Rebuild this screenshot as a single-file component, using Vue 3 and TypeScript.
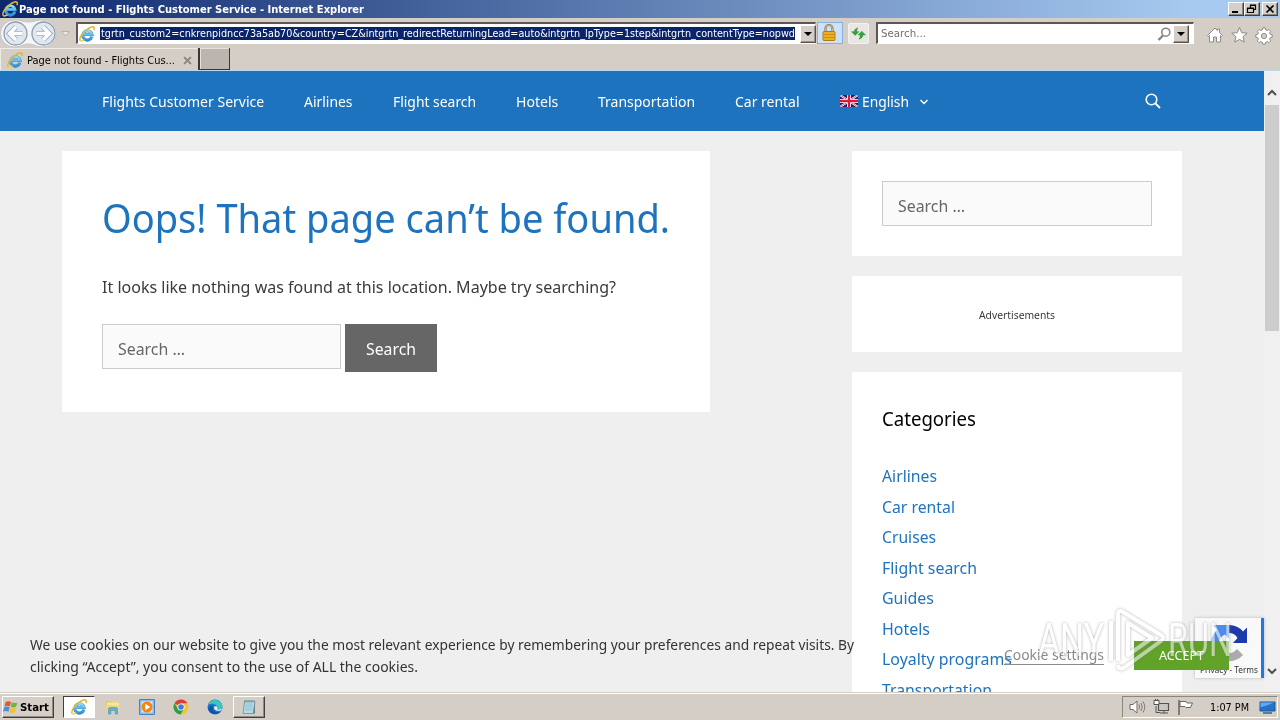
<script setup lang="ts">
import type { Directive } from 'vue'

// Condenses or widens a run of text so that it takes up the given width in px.
const vFit: Directive<HTMLElement, number> = {
  mounted(el, { value }) {
    const natural = el.getBoundingClientRect().width
    el.style.transform = `scaleX(${value / natural})`
    el.style.marginRight = `${value - natural}px`
  },
}

const nav = [
  { label: 'Flights Customer Service', width: 162.2 },
  { label: 'Airlines', width: 48.5 },
  { label: 'Flight search', width: 83.1 },
  { label: 'Hotels', width: 42.3 },
  { label: 'Transportation', width: 97.2 },
  { label: 'Car rental', width: 64.5 },
]

const categories = [
  { label: 'Airlines', width: 55 },
  { label: 'Car rental', width: 73 },
  { label: 'Cruises', width: 54 },
  { label: 'Flight search', width: 95 },
  { label: 'Guides', width: 52 },
  { label: 'Hotels', width: 48 },
  { label: 'Loyalty programs', width: 130 },
  { label: 'Transportation', width: 110 },
]
</script>

<template>
  <div class="screen">
    <svg class="defs" width="0" height="0">
      <defs>
        <linearGradient id="ieBlue" x1="0" y1="0" x2="0" y2="1">
          <stop offset="0" stop-color="#8fdcfb" />
          <stop offset="1" stop-color="#2a90dc" />
        </linearGradient>
        <symbol id="ie" viewBox="0 0 16 16">
          <path d="M12.900 10.700A4.700 4.700 0 1 1 13 8.500H4.500" fill="none" stroke="#2f7fc0" stroke-width="3" />
          <path d="M12.900 10.700A4.700 4.700 0 1 1 13 8.500H4.500" fill="none" stroke="url(#ieBlue)" stroke-width="2.300" />
          <path d="M1.300 14.600C-.3 12.400 3 7.300 7.200 4 11.200.8 15-.2 15.300 2c.1.7-.1 1.500-.5 2.200" fill="none" stroke="#e9b52b" stroke-width="1.500" />
          <path d="M1.300 14.600c1 .9 2.700.2 4.300-.8" fill="none" stroke="#f2cf4a" stroke-width="1.300" />
        </symbol>
      </defs>
    </svg>

    <header class="titlebar">
      <svg class="ie-title"><use href="#ie" /></svg>
      <span v-fit="345" class="fit">Page not found - Flights Customer Service - Internet Explorer</span>
      <div class="winbtns">
        <i class="winbtn"><svg viewBox="0 0 14 12"><path d="M3 9h6" stroke="#000" stroke-width="2" /></svg></i>
        <i class="winbtn"><svg viewBox="0 0 14 12"><path d="M5.500 5V2.500h5v4H9M5 2h6M2.500 5.500h6v4h-6zM2 5h7" fill="none" stroke="#000" stroke-width="1.200" /></svg></i>
        <i class="winbtn close"><svg viewBox="0 0 14 12"><path d="M3.500 2.500l7 7M10.500 2.500l-7 7" stroke="#000" stroke-width="1.700" /></svg></i>
      </div>
    </header>

    <div class="toolbar">
      <svg class="navbtns" viewBox="0 0 72 30">
        <path d="M14 2C22 2 22 4 28.500 4S36 2 43 2a13 13 0 0 1 0 27c-7 0-8-3-14.500-3S22 29 14 29A13.500 13.500 0 0 1 14 2z" fill="#f5f6f8" stroke="#c4c5ca" />
        <g fill="#dfe7f1" stroke="#919cad" stroke-width="1.300">
          <circle cx="15.500" cy="15.500" r="11.500" />
          <circle cx="43.500" cy="15.500" r="11.500" />
        </g>
        <g fill="none" stroke="#9ba9bd" stroke-width="5.200"><path d="M22.500 15.500h-12M16 9l-6.500 6.500L16 22M36.500 15.500h12M43 9l6.500 6.500L43 22" /></g>
        <g fill="none" stroke="#fff" stroke-width="3.400"><path d="M22.500 15.500h-12M16 9l-6.500 6.500L16 22M36.500 15.500h12M43 9l6.500 6.500L43 22" /></g>
        <path d="M61.500 13.500h8l-4 4.500z" fill="#e8e5e2" stroke="#b5b1ad" />
      </svg>
      <div class="address">
        <svg class="ie16"><use href="#ie" /></svg>
        <div class="selected"><span v-fit="694" class="fit">tgrtn_custom2=cnkrenpidncc73a5ab70&amp;country=CZ&amp;intgrtn_redirectReturningLead=auto&amp;intgrtn_lpType=1step&amp;intgrtn_contentType=nopwd</span></div>
        <i class="drop"></i>
      </div>
      <div class="lock">
        <svg viewBox="0 0 16 18"><path d="M4.500 8V4.500a3.500 3.500 0 0 1 7 0V8" fill="none" stroke="#8d7b4a" stroke-width="2.200" /><path d="M4.500 8V4.500a3.500 3.500 0 0 1 7 0V8" fill="none" stroke="#dcc88a" stroke-width=".8" /><rect x="2" y="7.500" width="12" height="9" rx="1" fill="#edb022" stroke="#b07c12" /><path d="M3 10.500h10M3 13.500h10" stroke="#c98e14" /></svg>
      </div>
      <div class="refresh">
        <svg viewBox="0 0 18 16"><g fill="#36a23a" stroke="#1f7d27" stroke-width=".4"><path d="M1.500 6h2.700C4.500 4 6 2.500 8.500 2 7.300 3 7.200 4.500 7.200 6h2.300L5.500 10z" /><path d="M16.500 9.500h-2.700c-.3 2.500-1.800 4-4.300 4.500 1.200-1 1.300-3 1.300-4.500H8.500l4-4z" /></g></svg>
      </div>
      <div class="ie-search">
        <span v-fit="45" class="fit">Search...</span>
        <svg viewBox="0 0 14 14"><circle cx="8.800" cy="5.200" r="4" fill="none" stroke="#858585" stroke-width="1.600" /><path d="M6 8.500L1.500 13" stroke="#858585" stroke-width="2.400" /></svg>
        <i class="drop"></i>
      </div>
      <svg class="tools" viewBox="0 0 68 20">
        <g fill="#fff" stroke="#8d8b89" stroke-width="1" stroke-linejoin="round">
          <path d="M1.500 10.500L9 3l2.500 2.500V4h2v3.500l3 3-1 1-1-1V17h-4v-5h-3v5h-4v-6.500l-1 1z" />
          <path d="M33.500 2.500l2.200 5.200 5.500.4-4.200 3.600 1.300 5.500-4.800-2.900-4.800 2.900 1.300-5.500-4.200-3.600 5.500-.4z" />
          <path d="M56.700 3h2.600l.4 1.800 1.600.8 1.600-1.100 1.800 1.800-1.100 1.600.8 1.600 1.800.3v2.500l-1.800.4-.8 1.600 1.100 1.600-1.800 1.800-1.600-1.100-1.600.8-.4 1.800h-2.600l-.4-1.800-1.600-.8-1.600 1.100-1.800-1.800 1.100-1.600-.8-1.600-1.800-.4v-2.500l1.800-.3.8-1.600-1.100-1.600 1.800-1.800 1.600 1.100 1.600-.8z" />
          <circle cx="58" cy="11" r="2.600" fill="#d6cfc8" />
        </g>
      </svg>
    </div>

    <div class="tabs">
      <div class="tab">
        <svg class="ie16"><use href="#ie" /></svg>
        <span v-fit="148" class="fit">Page not found - Flights Cus...</span>
        <svg class="tabx" viewBox="0 0 8 8"><path d="M1 1l6 6M7 1L1 7" stroke="#8b8681" stroke-width="1.800" /></svg>
      </div>
      <div class="newtab"></div>
    </div>

    <main class="page">
      <div class="site">
        <nav class="sitenav">
          <span v-for="item in nav" :key="item.label" v-fit="item.width" class="fit">{{ item.label }}</span>
          <div class="lang">
            <svg class="flag" viewBox="0 0 18 12"><path fill="#1c1f72" d="M0 0h18v12H0z" /><path d="M0 0l18 12M18 0L0 12" stroke="#fff" stroke-width="2" /><path d="M0 0l18 12M18 0L0 12" stroke="#d8294a" stroke-width=".8" /><path d="M9 0v12M0 6h18" stroke="#fff" stroke-width="4" /><path d="M9 0v12M0 6h18" stroke="#dc1737" stroke-width="2.400" /></svg>
            <span v-fit="47" class="fit">English</span>
            <svg class="chev" viewBox="0 0 10 8"><path d="M1.500 2L5 5.500 8.500 2" fill="none" stroke="#fff" stroke-width="1.400" /></svg>
          </div>
          <svg class="mag" viewBox="0 0 16 16"><circle cx="6.500" cy="6.500" r="5.300" fill="none" stroke="#fff" stroke-width="1.600" /><path d="M10.500 10.500L15 15" stroke="#fff" stroke-width="1.800" /></svg>
        </nav>
        <div class="columns">
          <article class="card notfound">
            <h1><span v-fit="568" class="fit">Oops! That page can’t be found.</span></h1>
            <p><span v-fit="514" class="fit">It looks like nothing was found at this location. Maybe try searching?</span></p>
            <div class="searchform">
              <div class="field"><span v-fit="67" class="fit">Search …</span></div>
              <div class="submit"><span v-fit="50" class="fit">Search</span></div>
            </div>
          </article>
          <aside>
            <section class="card widget-search"><div class="field"><span v-fit="67" class="fit">Search …</span></div></section>
            <section class="card ads"><span v-fit="76" class="fit">Advertisements</span></section>
            <section class="card cats">
              <h2><span v-fit="94" class="fit">Categories</span></h2>
              <ul>
                <li v-for="c in categories" :key="c.label"><span v-fit="c.width" class="fit">{{ c.label }}</span></li>
              </ul>
            </section>
          </aside>
        </div>
      </div>

      <div class="scrollbar">
        <svg viewBox="0 0 10 7"><path d="M1 6l4-4 4 4" fill="none" stroke="#505050" stroke-width="2" /></svg>
        <div class="thumb"></div>
        <svg class="down" viewBox="0 0 10 7"><path d="M1 1l4 4 4-4" fill="none" stroke="#505050" stroke-width="2" /></svg>
      </div>

      <div class="captcha">
        <svg viewBox="0 0 40 40">
          <path d="M20 2a18 18 0 0 1 14 6.500L38 4.500V20H24l4.500-5A10 10 0 0 0 20 10z" fill="#1c3aa9" />
          <path d="M20 2v14l-4-4.500A10 10 0 0 0 10 20H2A18 18 0 0 1 8 7L4 2z" fill="#4a8cf0" />
          <path d="M2 20h14l-5 4.500a10 10 0 0 0 17 1.500l6 6A18 18 0 0 1 6.500 31.500L2 36z" fill="#ababab" />
        </svg>
        <span v-fit="58" class="fit">Privacy - Terms</span>
      </div>

      <div class="cookies">
        <p>
          <span v-fit="824" class="fit">We use cookies on our website to give you the most relevant experience by remembering your preferences and repeat visits. By</span><br />
          <span v-fit="388" class="fit">clicking “Accept”, you consent to the use of ALL the cookies.</span>
        </p>
        <div class="settings"><span v-fit="100" class="fit">Cookie settings</span></div>
        <div class="accept"><span v-fit="45" class="fit">ACCEPT</span></div>
      </div>

      <svg class="watermark" viewBox="0 0 204 76">
        <g fill="#fff">
          <text x="8" y="55" textLength="66" lengthAdjust="spacingAndGlyphs">ANY</text>
          <text x="138" y="55" textLength="64" lengthAdjust="spacingAndGlyphs">RUN</text>
        </g>
        <g fill="none" stroke="#fff" stroke-width="4" stroke-linejoin="round">
          <path d="M88 60V14q0-6 5-3l38 23q4 3 0 6L95 66q-6 4-7-2" />
          <path d="M81 20v40M98 22v32l24-17z" />
        </g>
      </svg>
    </main>

    <footer class="taskbar">
      <div class="start">
        <svg viewBox="0 0 17 16"><path d="M3 2.500q3-1.500 5.500.2L7.300 7.400Q4.500 6 1.600 7.200z" fill="#e6582c" /><path d="M9.300 3q3 1.500 6 .2l-1.300 4.600q-3 1.300-5.700 0z" fill="#6fb63c" /><path d="M1.400 8.200q3-1.300 5.700.2l-1.300 4.700Q3 11.700 0 12.800z" fill="#4b8ee0" /><path d="M8 8.800q3 1.400 5.800.1l-1.300 4.600q-3 1.200-5.800 0z" fill="#f3c12d" /></svg>
        <span v-fit="29" class="fit">Start</span>
      </div>
      <div class="task active"><svg viewBox="0 0 16 16"><use href="#ie" /></svg></div>
      <div class="task"><svg viewBox="0 0 16 16"><path d="M1 2h5l1 1h7v5H1z" fill="#e6c76a" /><path d="M2 3.500h12V9H2z" fill="#f8e7a2" /><path d="M1 6h14v6H1z" fill="#f0d67d" /><path d="M3.500 15V10q0-1.500 1.500-1.500h6q1.500 0 1.500 1.500v5h-2.300v-3.500H5.800V15z" fill="#58b4dd" stroke="#3b86b5" stroke-width=".5" /></svg></div>
      <div class="task"><svg viewBox="0 0 16 16"><path d="M.5.500h15v15H.5z" fill="#88bce9" stroke="#4a82bd" /><path d="M2.500 2.500h11v11h-11z" fill="#d9eaf8" /><circle cx="8" cy="8" r="5.500" fill="#f28518" /><path d="M6.200 4.700v6.600L11.300 8z" fill="#fff" /></svg></div>
      <div class="task"><svg viewBox="0 0 16 16"><circle cx="8" cy="8" r="7.500" fill="#f7c32e" /><path d="M8 8L1.500 4.200A7.500 7.500 0 0 1 14.500 4.300H8z" fill="#dc3e33" /><path d="M1.500 4.200A7.500 7.500 0 0 0 7.500 15.500L11 10 5 9.700z" fill="#2e9e4c" /><circle cx="8" cy="8" r="3.600" fill="#fff" /><circle cx="8" cy="8" r="2.800" fill="#3c7ce0" /></svg></div>
      <div class="task"><svg viewBox="0 0 16 16"><circle cx="8" cy="8" r="7.500" fill="#1976c8" /><path d="M1 6A7.500 7.500 0 0 1 15.500 7.500C15.500 10 13 11 10.500 10.300 9 9.800 10.500 9 10 7.500 9 4.500 4 4 1 6z" fill="#3bc5bb" /><path d="M6 7C4 11 8 14.500 13.500 12.800A7.500 7.500 0 0 1 1.500 11C1 8 3 6 6 7z" fill="#15539f" /><path d="M7.500 7.200c-1.500 3 1.500 5.500 6.500 4.300l1.300-1.700c-2 1-5 .9-5.200.2-.1-.5.500-1.500-.2-2.500z" fill="#e5f1f4" /></svg></div>
      <div class="task raised"><svg viewBox="0 0 16 16"><path d="M3.500 2h10.500l-1.500 12.500H2z" fill="#b5dbe5" stroke="#5f95a5" stroke-width=".8" /><path d="M4.500 5h7.500M4.200 7h7.500M4 9h7.500M3.700 11h7.500" stroke="#7eb4c4" stroke-width=".6" /><path d="M4 1.500v2M6 1.500v2M8 1.500v2M10 1.500v2M12 1.500v2" stroke="#63777d" stroke-width=".8" /><path d="M14 2v12.500h-2z" fill="#68808a" /></svg></div>
      <div class="tray">
        <svg viewBox="0 0 17 16"><path d="M1 5.500h3L8 2v12l-4-3.500H1z" fill="#fff" stroke="#6d6a67" /><path d="M10 5.500q1.500 2.500 0 5M12 4q2.500 4 0 8M14 2.500q3.500 5.500 0 11" fill="none" stroke="#777370" stroke-width=".9" /></svg>
        <svg viewBox="0 0 17 16"><path d="M5.500 4.500h10v7h-10z" fill="#c9c7c4" stroke="#55524f" stroke-width="1.200" /><path d="M7 14h8M11 12v2M3 7v6.500h4" fill="none" stroke="#55524f" /><path d="M1 1.500h5v4H1z" fill="#fff" stroke="#55524f" /><path d="M2.500 0v2M4.500 0v2" stroke="#55524f" /></svg>
        <svg viewBox="0 0 17 16"><path d="M2 1v15" stroke="#5f5c59" stroke-width="1.400" /><path d="M3 2.500h6l1 1.500h5.500l-2 4.500H9l-1-1H3z" fill="#fff" stroke="#6a6764" /></svg>
        <span v-fit="39" class="fit clock">1:07 PM</span>
        <svg viewBox="0 0 17 16"><path d="M1 3h15v9H1z" fill="#2173cc" stroke="#245591" /><path d="M1.500 3.500h14l-14 5z" fill="#63aaed" /><path d="M4 14h9" stroke="#355f8c" stroke-width="1.500" /></svg>
      </div>
    </footer>
  </div>
</template>

<style>
body { margin: 0; overflow: hidden; }
</style>

<style scoped>
.screen { width: 1280px; height: 720px; display: flex; flex-direction: column; overflow: hidden; position: relative; background: #d5cec7; font-family: "DejaVu Sans Condensed", "DejaVu Sans", sans-serif; font-size: 11px; color: #000; }
.screen *, .screen { box-sizing: border-box; }
.defs { position: absolute; }
.fit { display: inline-block; white-space: nowrap; transform-origin: 0 50%; flex: none; }
svg { flex: none; display: block; }

.titlebar { height: 18px; flex: none; display: flex; align-items: center; background: linear-gradient(90deg, #0d276c 0%, #a6caf0 93%); color: #fff; font-weight: bold; padding: 0 2px; }
.ie-title { width: 16px; height: 16px; margin-right: 1px; }
.winbtns { margin-left: auto; display: flex; }
.winbtn { width: 16px; height: 14px; background: #d4d0c8; border: 1px solid; border-color: #fff #404040 #404040 #fff; box-shadow: inset -1px -1px #8a8680; }
.winbtn svg { width: 14px; height: 12px; }
.winbtn.close { margin-left: 2px; }

.toolbar { height: 30px; flex: none; display: flex; align-items: flex-start; }
.navbtns { width: 72px; height: 30px; }
.address { margin: 4px 0 0 4px; width: 740px; height: 22px; background: #fff; border: 1px solid; border-color: #5c5654 #d4d0c8 #fff #5c5654; border-width: 2px 1px 1px 2px; display: flex; align-items: center; }
.ie16 { width: 16px; height: 16px; }
.address .ie16 { margin: 0 5px 0 1px; }
.selected { width: 695px; height: 13px; background: #0a246a; color: #fff; line-height: 13px; display: flex; padding-left: 1px; overflow: hidden; }
.drop { margin-left: auto; width: 16px; height: 18px; background: #d5cec7; border: 1px solid; border-color: #fff #55504d #55504d #fff; box-shadow: inset -1px -1px #9a948f; display: flex; align-items: center; justify-content: center; }
.drop::before { content: ""; border: 4px solid transparent; border-top-color: #000; border-bottom: 0; }
.address .drop { margin-right: -1px; }
.lock { margin: 4px 0 0 1px; width: 26px; height: 22px; background: #cfe1f8; border: 1px solid #86b0e0; padding: 1px 4px 1px 3px; }
.lock svg { width: 16px; height: 18px; }
.refresh { margin: 5px 0 0 5px; width: 21px; height: 21px; background: #e9e7e4; border: 1px solid #f4f2f0; border-radius: 2px; padding: 2px 1px; }
.refresh svg { width: 17px; height: 15px; }
.ie-search { margin: 4px 0 0 7px; width: 318px; height: 22px; background: #fff; border: 1px solid; border-color: #5c5654 #fff #fff #5c5654; border-width: 2px 1px 1px 2px; display: flex; align-items: center; color: #6f6f6f; padding: 0 4px 0 3px; }
.ie-search svg { width: 14px; height: 14px; margin-left: auto; }
.ie-search .drop { margin-left: 2px; }
.tools { width: 68px; height: 20px; margin: 7px 0 0 12px; }

.tabs { height: 23px; flex: none; display: flex; border-bottom: 1px solid #b9d9ea; }
.tab { width: 198px; height: 22px; display: flex; align-items: center; padding-left: 6px; border-left: 1px solid #efebe7; border-top: 1px solid #efebe7; padding-top: 1px; }
.tab .ie16 { margin-right: 4px; }
.tabx { width: 9px; height: 9px; margin-left: 8px; }
.newtab { width: 32px; height: 22px; background: #bcb4ae; border: solid #3b3735; border-width: 0 1px 1px 2px; box-shadow: inset 1px 1px #e6e1dd; }

.page { height: 621px; flex: none; position: relative; display: flex; overflow: hidden; background: #efefef; font-family: "Noto Sans", "Open Sans", sans-serif; }
.site { width: 1264px; height: 621px; overflow: hidden; }
.sitenav { height: 60px; background: #1e73be; color: #fff; display: flex; align-items: center; gap: 40px; padding: 1px 103px 0 102px; font-size: 14.800px; line-height: 59px; }
.lang { display: flex; align-items: center; }
.flag { width: 18px; height: 12px; margin: 0 4px 2px 0; }
.chev { width: 10px; height: 8px; margin-left: 10px; }
.mag { width: 16px; height: 16px; margin: 0 0 1px auto; }
.columns { display: flex; justify-content: space-between; align-items: flex-start; padding: 20px 82px 0 62px; }
.card { background: #fff; }
.notfound { width: 648px; height: 261px; padding: 40px; }
h1, h2, p, ul { margin: 0; padding: 0; font-weight: normal; list-style: none; }
h1 { font-size: 39.500px; line-height: 54px; height: 52px; color: #1e73be; }
.notfound p { font-size: 17px; line-height: 26px; margin: 31px 0 24px; height: 26px; color: #3a3a3a; }
.notfound p .fit { margin-left: -.5px; }
.searchform { display: flex; align-items: flex-start; gap: 4px; font-size: 17px; }
.field { border: 1px solid #ccc; background: #fafafa; color: #666; height: 45px; width: 239px; padding: 2px 0 0 15px; line-height: 44px; font-size: 17px; }
.submit { width: 92px; height: 48px; background: #666; color: #fff; line-height: 49px; padding-left: 21px; }
aside { width: 330px; display: flex; flex-direction: column; gap: 20px; }
.widget-search { height: 105px; padding: 30px; }
.widget-search .field { width: 270px; }
.ads { height: 76px; display: flex; align-items: center; justify-content: center; font-size: 10.800px; color: #3a3a3a; }
.cats { height: 420px; padding: 31px 30px 0; }
h2 { font-size: 19.500px; line-height: 32px; height: 32px; margin-bottom: 26px; }
li { font-size: 17px; line-height: 30.500px; height: 30.500px; color: #1e73be; }

.scrollbar { width: 16px; height: 621px; background: #f0f0f0; display: flex; flex-direction: column; align-items: center; }
.scrollbar svg { width: 10px; height: 7px; margin-top: 18px; }
.thumb { width: 14px; height: 226px; background: #cdcdcd; margin-top: 9px; }
.scrollbar .down { margin-top: auto; margin-bottom: 17px; }

.captcha { position: absolute; left: 1195px; top: 547px; width: 69px; height: 60px; background: #f9f9f9; border-right: 3px solid #2478dc; box-shadow: 0 0 3px #b5b5b5; font-size: 8px; line-height: 11px; color: #333; padding: 5px 0 0 5px; }
.captcha svg { width: 40px; height: 40px; margin-left: 9px; }
.captcha .fit { margin-top: 1px; }
.cookies { position: absolute; left: 30px; top: 562px; width: 1199px; height: 50px; display: flex; align-items: flex-start; color: #333; }
.cookies p { width: 974px; font-size: 14.500px; line-height: 22px; }
.settings { margin-top: 11px; width: 100px; font-size: 15px; line-height: 20px; height: 21px; border-bottom: 1px solid #898989; color: #898989; }
.accept { margin: 8px 0 0 30px; width: 95px; height: 29px; background: #61a229; color: #fff; font-size: 12px; line-height: 29px; padding-left: 25px; }
.watermark { position: absolute; left: 1030px; top: 530px; width: 204px; height: 76px; font: 46px Roboto, "Liberation Sans", sans-serif; opacity: .55; filter: drop-shadow(0 0 1.500px #777); }

.taskbar { height: 28px; flex: none; background: #d5cec7; display: flex; align-items: flex-start; border-top: 1px solid #d5cec7; box-shadow: inset 0 1px #fff; padding: 3px 2px 0; }
.start { width: 52px; height: 22px; border: 1px solid; border-color: #fff #45403d #45403d #fff; box-shadow: inset -1px -1px #918b86; display: flex; align-items: center; font-weight: bold; margin-right: 9px; }
.start svg { width: 16px; height: 16px; margin-right: 1px; }
.task { width: 32px; height: 22px; margin-right: 2px; border: 1px solid transparent; display: flex; align-items: center; justify-content: center; }
.task svg { width: 16px; height: 16px; }
.task.active { background: #fff; border-color: #45403d #fff #fff #45403d; }
.task.raised { border-color: #fff #45403d #45403d #fff; box-shadow: inset -1px -1px #918b86; }
.tray { margin-left: auto; width: 156px; height: 22px; border: 1px solid; border-color: #8c8681 #fff #fff #8c8681; display: flex; align-items: center; padding-left: 6px; }
.tray svg { width: 17px; height: 16px; margin-right: 7px; }
.clock { margin-left: 9px; }
.tray .clock + svg { margin: 0 0 0 10px; }
</style>
